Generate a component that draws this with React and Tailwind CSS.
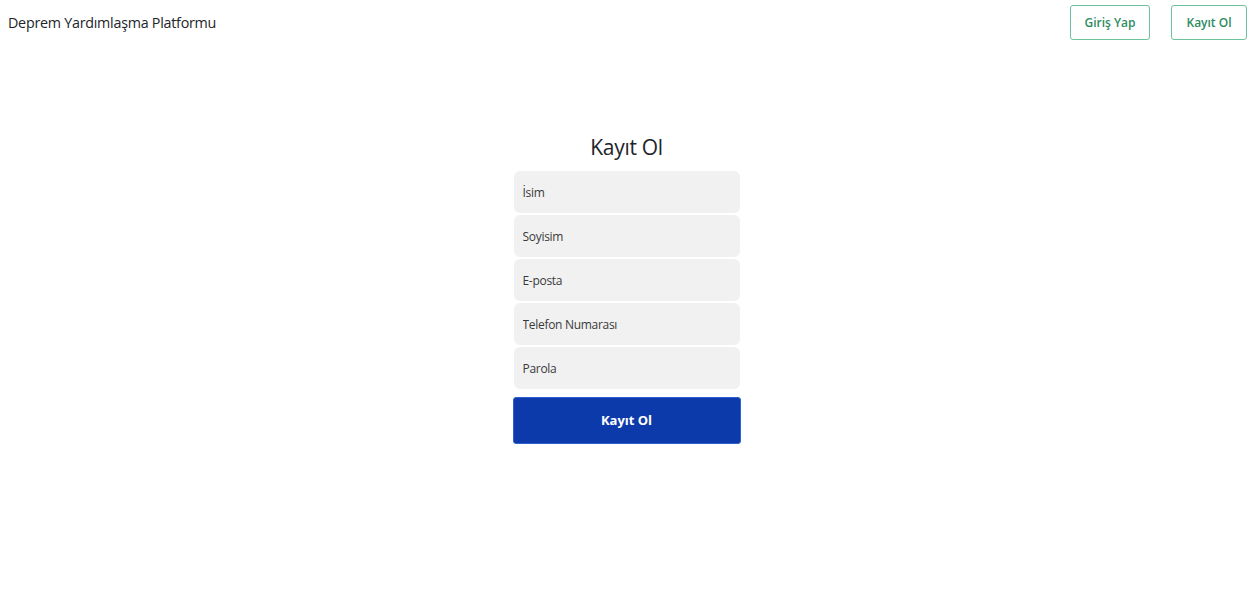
const FIELDS = [
  { name: 'name', label: 'İsim', type: 'text' },
  { name: 'surname', label: 'Soyisim', type: 'text' },
  { name: 'email', label: 'E-posta', type: 'email' },
  { name: 'phone', label: 'Telefon Numarası', type: 'tel' },
  { name: 'password', label: 'Parola', type: 'password' },
]

export default function App() {
  return (
    <div className="min-h-screen bg-white text-[#212529] font-['Open_Sans','Noto_Sans',sans-serif]">
      {/* Header */}
      <header className="flex items-start justify-between pl-[8px] pr-[6px] pt-[5px]">
        <span className="mt-[7px] text-[14.3px] tracking-[-0.25px]">Deprem Yardımlaşma Platformu</span>
        <div className="flex gap-[21px]">
          <button className="h-[35px] w-[80px] rounded-[3px] border border-[#6cc29c] text-[12px] font-semibold text-[#2e8b62]">
            Giriş Yap
          </button>
          <button className="h-[35px] w-[76px] rounded-[3px] border border-[#6cc29c] text-[12px] font-semibold text-[#2e8b62]">
            Kayıt Ol
          </button>
        </div>
      </header>

      {/* Form */}
      <main className="flex justify-center pt-[92px]">
        <form className="flex w-[228px] flex-col items-center" onSubmit={e => e.preventDefault()}>
          <h1 className="mb-[9px] text-[21px] leading-[30px] tracking-[-0.3px]">Kayıt Ol</h1>
          <div className="flex w-[226px] flex-col gap-[2px]">
            {FIELDS.map(f => (
              <input
                key={f.name}
                type={f.type}
                placeholder={f.label}
                className="h-[42px] w-full rounded-[6px] bg-[#f1f1f1] px-[9px] text-[12px] tracking-[-0.3px] text-[#333] outline-none placeholder:text-[#3a3a3a]"
              />
            ))}
          </div>
          <button
            type="submit"
            className="mt-[8px] h-[47px] w-[228px] rounded-[3px] border border-[#2f5fd0] bg-[#0d3aab] text-[13px] font-bold text-white"
          >
            Kayıt Ol
          </button>
        </form>
      </main>
    </div>
  )
}
